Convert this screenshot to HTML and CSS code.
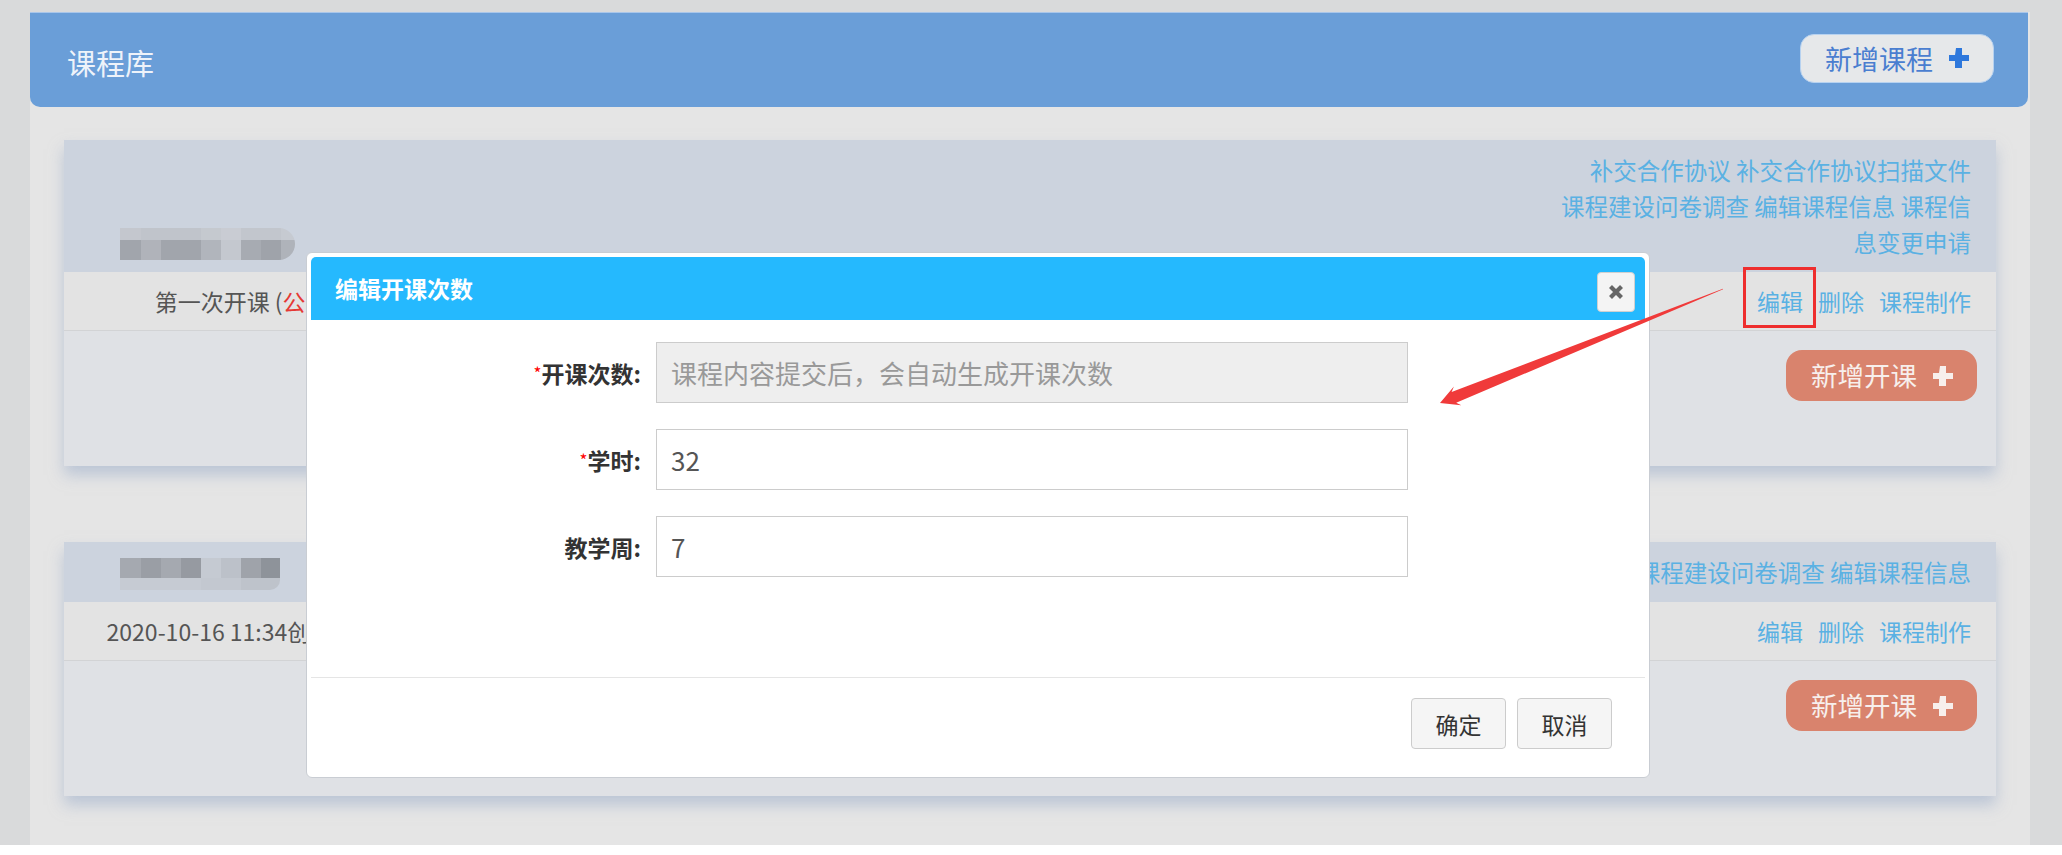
FILE: index.html
```html
<!DOCTYPE html>
<html lang="zh-CN">
<head>
    <meta charset="UTF-8">
    <title>课程库</title>
    <link rel="stylesheet" href="styles.css">
</head>
<body>
    <div class="page">
        <div class="panel">
            <div class="panel-head">
                <span class="panel-title">课程库</span>
                <button class="btn-add-course">新增课程
                    <svg class="plus" viewBox="0 0 20 20"><path d="M7 0h6v7h7v6h-7v7h-7v-7h-7v-6h7z"/></svg>
                </button>
            </div>

            <div class="course-list">
                <div class="course">
                    <div class="course-head">
                        <div class="mosaic mosaic-a"></div>
                        <div class="course-links">
                            <a>补交合作协议</a> <a>补交合作协议扫描文件</a> <a>课程建设问卷调查</a> <a>编辑课程信息</a> <a class="wrap">课程信息变更申请</a>
                        </div>
                    </div>
                    <div class="course-row">
                        <div class="row-info">第一次开课 (<span class="red">公开课</span>)</div>
                        <div class="row-links"><a class="marked">编辑</a><a>删除</a><a>课程制作</a></div>
                    </div>
                    <div class="course-body">
                        <button class="btn-add-class">新增开课
                            <svg class="plus" viewBox="0 0 20 20"><path d="M7 0h6v7h7v6h-7v7h-7v-7h-7v-6h7z"/></svg>
                        </button>
                    </div>
                </div>

                <div class="course">
                    <div class="course-head">
                        <div class="mosaic mosaic-b"></div>
                        <div class="course-links">
                            <a>课程建设问卷调查</a> <a>编辑课程信息</a>
                        </div>
                    </div>
                    <div class="course-row">
                        <div class="row-info">2020-10-16 11:34创建 第二次</div>
                        <div class="row-links"><a>编辑</a><a>删除</a><a>课程制作</a></div>
                    </div>
                    <div class="course-body">
                        <button class="btn-add-class">新增开课
                            <svg class="plus" viewBox="0 0 20 20"><path d="M7 0h6v7h7v6h-7v7h-7v-7h-7v-6h7z"/></svg>
                        </button>
                    </div>
                </div>
            </div>
        </div>

        <!-- 编辑开课次数弹窗 -->
        <div class="modal">
            <div class="modal-head">
                <span class="modal-title">编辑开课次数</span>
                <button class="modal-close">
                    <svg viewBox="0 0 16 16" width="16" height="16"><path d="M2.5 2.5L13.5 13.5M13.5 2.5L2.5 13.5"/></svg>
                </button>
            </div>
            <div class="modal-body">
                <label class="form-label"><span class="req">*</span>开课次数:</label>
                <input class="form-input" type="text" disabled placeholder="课程内容提交后，会自动生成开课次数">
                <label class="form-label"><span class="req">*</span>学时:</label>
                <input class="form-input" type="text" value="32">
                <label class="form-label">教学周:</label>
                <input class="form-input" type="text" value="7">
            </div>
            <div class="modal-foot">
                <button class="modal-btn">确定</button>
                <button class="modal-btn">取消</button>
            </div>
        </div>

        <svg class="arrow" viewBox="0 0 300 130">
            <polygon points="292.9,8.7 21.6,112 23.9,106.6 10,123 31.3,125.2 26.2,122.8 293.1,9.3"/>
        </svg>
    </div>
</body>
</html>
```

FILE: styles.css
```css
body {
    margin: 0;
    background: #ffffff;
    font-family: "Noto Sans CJK SC", "Noto Sans", sans-serif;
}
a {
    cursor: pointer;
}
button {
    font-family: inherit;
    cursor: pointer;
}
.page {
    position: relative;
    width: 2062px;
    height: 845px;
    box-sizing: border-box;
    padding: 12px 32px 0 30px;
    background: #d9dadb;
}
.panel {
    height: 100%;
    background: #e5e5e5;
}
.panel-head {
    height: 95px;
    margin-right: 2px;
    box-sizing: border-box;
    display: flex;
    align-items: center;
    justify-content: space-between;
    padding: 0 34px 0 37px;
    background: #6a9ed8;
    border-top: 1px solid #a9c6ea;
    border-radius: 0 0 10px 10px;
}
.panel-title {
    color: #eef3fa;
    font-size: 29px;
    line-height: 1;
    padding-top: 4px;
}
.plus {
    width: 20px;
    height: 20px;
    fill: currentColor;
    flex: none;
}
.btn-add-course {
    height: 49px;
    margin-bottom: 4px;
    display: flex;
    align-items: center;
    gap: 16px;
    padding: 0 24px;
    font-size: 27px;
    line-height: 1;
    color: #4a7ed0;
    background: #e6e8ea;
    border: 1px solid #b7d2f0;
    border-radius: 14px;
}
.btn-add-course .plus {
    color: #2e78dc;
}

.course-list {
    padding: 33px 34px 0;
}
.course {
    background: #dfe1e5;
    box-shadow: 0 9px 14px rgba(160, 176, 204, 0.6);
    margin-bottom: 76px;
}
.course-head {
    display: flex;
    align-items: flex-end;
    justify-content: space-between;
    padding: 12px 25px 12px 56px;
    background: #ccd3de;
}
.course-links {
    width: 420px;
    text-align: right;
    font-size: 23.5px;
    line-height: 36px;
    color: #5ab1e3;
}
.course-links a {
    white-space: nowrap;
}
.course-links a.wrap {
    white-space: normal;
}
.mosaic {
    width: 175px;
    height: 32px;
    filter: blur(0.6px);
}
.mosaic-a {
    border-radius: 0 16px 16px 0;
    background:
        linear-gradient(90deg, #a1a5ac 0 21px, #b0b3ba 21px 41px, #a1a5ac 41px 81px, #b1b5bc 81px 101px,
            #c4c8cf 101px 121px, #a7abb2 121px 141px, #9fa3aa 141px 161px, #afb3ba 161px) bottom / 100% 20px no-repeat,
        linear-gradient(90deg, #c4c7ce 0 21px, #c0c4cb 21px 81px, #c5c9cf 81px 101px, #c9ccd3 101px 121px,
            #c2c6cd 121px 161px, #c6cad1 161px) top / 100% 12px no-repeat;
}
.mosaic-b {
    width: 160px;
    border-radius: 0 0 10px 0;
    background:
        linear-gradient(90deg, #a5a9b0 0 21px, #9a9ea5 21px 41px, #a5a9b0 41px 61px, #969aa1 61px 81px,
            #c5cad2 81px 101px, #bcc1c9 101px 121px, #9fa3aa 121px 141px, #8e939a 141px) top / 100% 20px no-repeat,
        linear-gradient(90deg, #c6cbd3 0 81px, #c3c8d0 81px 121px, #bec3cb 121px) bottom / 100% 12px no-repeat;
}
.course-row {
    height: 58px;
    display: flex;
    align-items: center;
    justify-content: space-between;
    padding-right: 25px;
    background: #e3e3e3;
    border-bottom: 1px solid #d2d3d5;
    font-size: 23px;
    line-height: 30px;
}
.row-info {
    width: 386px;
    text-align: center;
    color: #555555;
    white-space: nowrap;
}
.red {
    color: #e53935;
}
.row-links {
    display: flex;
    gap: 15px;
    color: #5ab1e3;
}
.marked {
    position: relative;
}
.marked::after {
    content: "";
    position: absolute;
    left: -14px;
    right: -13px;
    top: -19px;
    bottom: -12px;
    border: 3px solid #ee2e2e;
}
.course-body {
    height: 135px;
    box-sizing: border-box;
    display: flex;
    justify-content: flex-end;
    align-items: flex-start;
    padding: 19px 19px 0;
}
.btn-add-class {
    height: 51px;
    display: flex;
    align-items: center;
    gap: 16px;
    padding: 0 24px 0 25px;
    font-size: 26.5px;
    line-height: 1;
    color: #f7efec;
    background: #d9836d;
    border: none;
    border-radius: 16px;
}

/* 弹窗 */
.modal {
    position: absolute;
    left: 306px;
    top: 252px;
    width: 1344px;
    box-sizing: border-box;
    padding: 4px;
    background: #ffffff;
    border: 1px solid #c9cdd3;
    border-radius: 6px;
}
.modal-head {
    height: 63px;
    box-sizing: border-box;
    display: flex;
    align-items: center;
    justify-content: space-between;
    padding: 0 10px 0 24px;
    background: #25b9fe;
    border-radius: 5px 5px 0 0;
}
.modal-title {
    color: #ffffff;
    font-size: 23px;
    font-weight: bold;
    line-height: 1;
}
.modal-close {
    width: 38px;
    height: 40px;
    margin-top: 6px;
    padding: 0;
    display: flex;
    align-items: center;
    justify-content: center;
    background: #f4f4f4;
    border: 1px solid #d0d0d0;
    border-radius: 4px;
}
.modal-close svg {
    stroke: #666666;
    stroke-width: 4.2;
    fill: none;
}
.modal-body {
    display: grid;
    grid-template-columns: 330px 752px;
    column-gap: 15px;
    row-gap: 26px;
    align-items: center;
    padding: 22px 0 100px;
}
.form-label {
    text-align: right;
    font-size: 23px;
    font-weight: bold;
    color: #333333;
}
.req {
    color: #ff0000;
    font-size: 17px;
    font-weight: normal;
    vertical-align: 3px;
}
.form-input {
    width: 752px;
    height: 61px;
    box-sizing: border-box;
    padding: 0 14px;
    font-family: inherit;
    font-size: 26px;
    color: #555555;
    background: #ffffff;
    border: 1px solid #cccccc;
}
.form-input:disabled {
    background: #eeeeee;
}
.form-input::placeholder {
    color: #999999;
}
.modal-foot {
    display: flex;
    justify-content: flex-end;
    gap: 11px;
    padding: 20px 33px 24px 0;
    border-top: 1px solid #e5e5e5;
}
.modal-btn {
    width: 95px;
    height: 51px;
    font-size: 23px;
    color: #333333;
    background: #f5f5f5;
    border: 1px solid #cccccc;
    border-radius: 4px;
}

.arrow {
    position: absolute;
    left: 1430px;
    top: 280px;
    width: 300px;
    height: 130px;
    fill: #f03a3a;
    pointer-events: none;
}
```
